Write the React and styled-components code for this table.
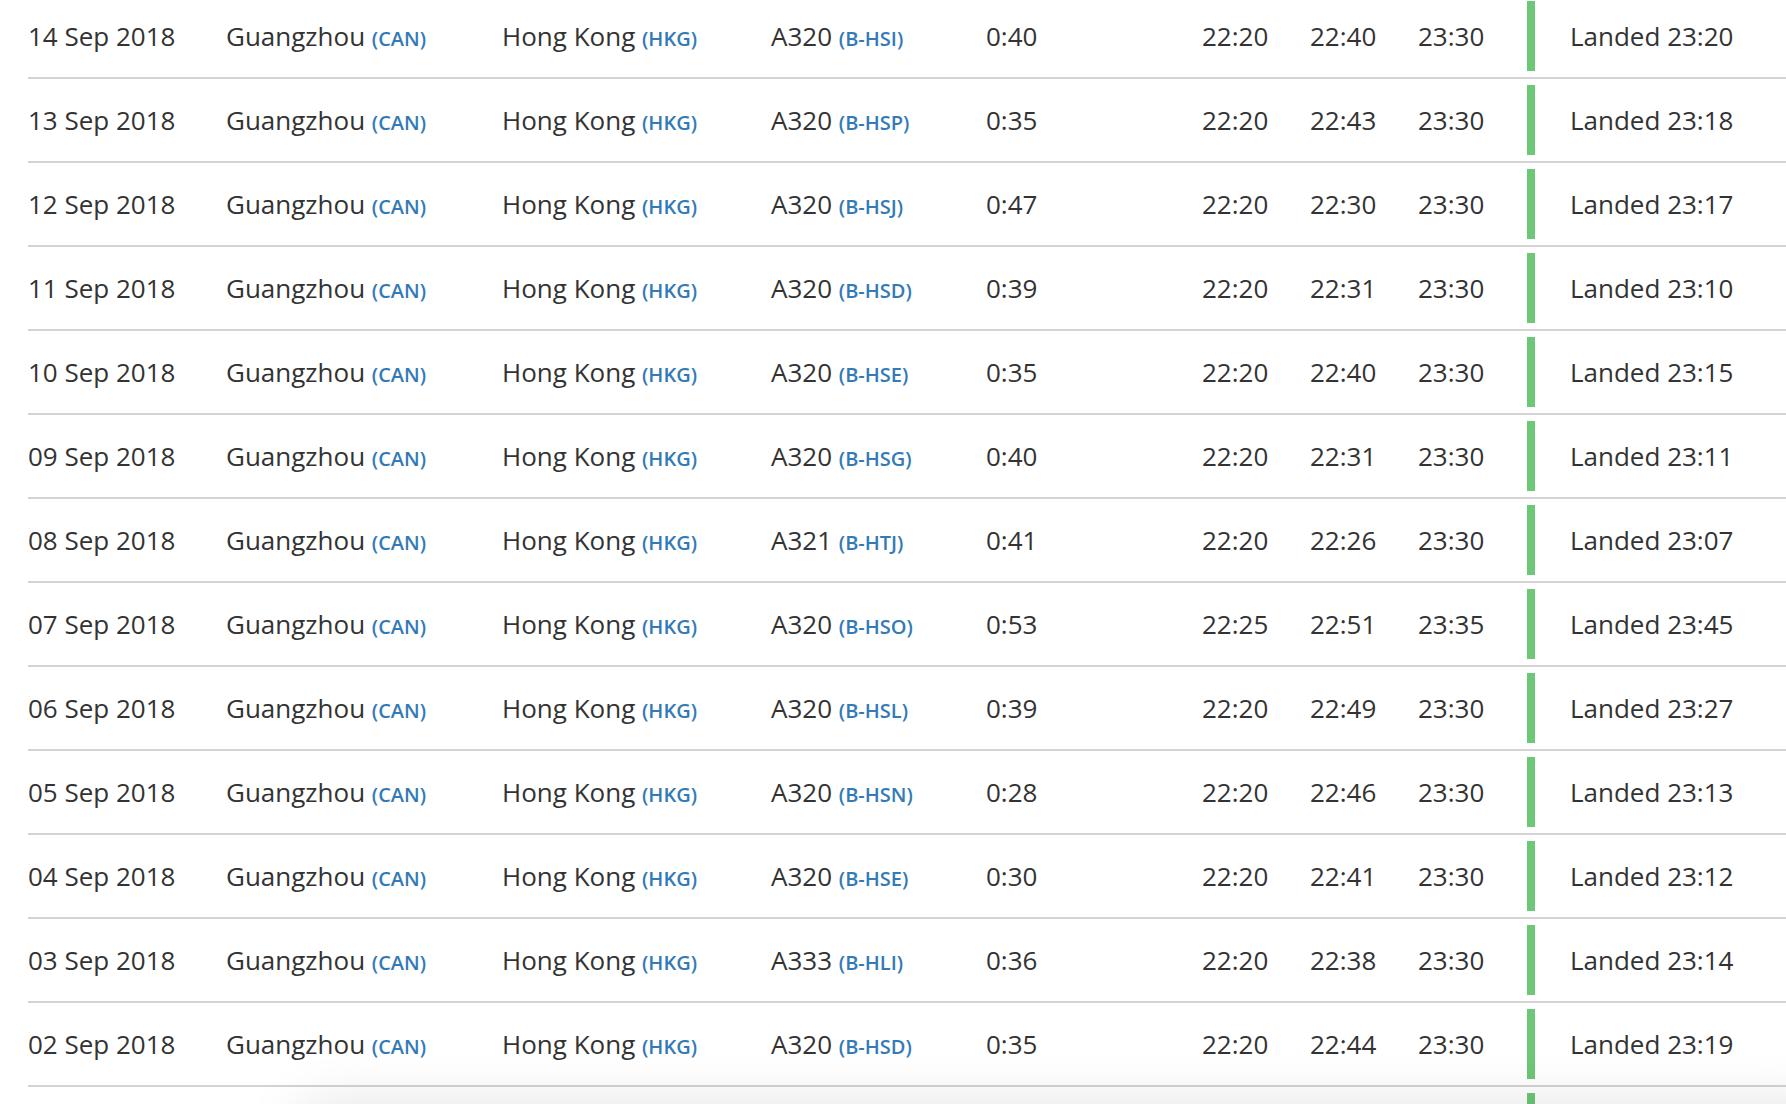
import styled, { createGlobalStyle } from 'styled-components';

const flights = [
    { date: '14 Sep 2018', type: 'A320', reg: 'B-HSI', dur: '0:40', std: '22:20', atd: '22:40', sta: '23:30', landed: '23:20' },
    { date: '13 Sep 2018', type: 'A320', reg: 'B-HSP', dur: '0:35', std: '22:20', atd: '22:43', sta: '23:30', landed: '23:18' },
    { date: '12 Sep 2018', type: 'A320', reg: 'B-HSJ', dur: '0:47', std: '22:20', atd: '22:30', sta: '23:30', landed: '23:17' },
    { date: '11 Sep 2018', type: 'A320', reg: 'B-HSD', dur: '0:39', std: '22:20', atd: '22:31', sta: '23:30', landed: '23:10' },
    { date: '10 Sep 2018', type: 'A320', reg: 'B-HSE', dur: '0:35', std: '22:20', atd: '22:40', sta: '23:30', landed: '23:15' },
    { date: '09 Sep 2018', type: 'A320', reg: 'B-HSG', dur: '0:40', std: '22:20', atd: '22:31', sta: '23:30', landed: '23:11' },
    { date: '08 Sep 2018', type: 'A321', reg: 'B-HTJ', dur: '0:41', std: '22:20', atd: '22:26', sta: '23:30', landed: '23:07' },
    { date: '07 Sep 2018', type: 'A320', reg: 'B-HSO', dur: '0:53', std: '22:25', atd: '22:51', sta: '23:35', landed: '23:45' },
    { date: '06 Sep 2018', type: 'A320', reg: 'B-HSL', dur: '0:39', std: '22:20', atd: '22:49', sta: '23:30', landed: '23:27' },
    { date: '05 Sep 2018', type: 'A320', reg: 'B-HSN', dur: '0:28', std: '22:20', atd: '22:46', sta: '23:30', landed: '23:13' },
    { date: '04 Sep 2018', type: 'A320', reg: 'B-HSE', dur: '0:30', std: '22:20', atd: '22:41', sta: '23:30', landed: '23:12' },
    { date: '03 Sep 2018', type: 'A333', reg: 'B-HLI', dur: '0:36', std: '22:20', atd: '22:38', sta: '23:30', landed: '23:14' },
    { date: '02 Sep 2018', type: 'A320', reg: 'B-HSD', dur: '0:35', std: '22:20', atd: '22:44', sta: '23:30', landed: '23:19' },
];

function App() {
    return (
        <>
            <GlobalStyle />
            <FlightList>
                {flights.map((f) => (
                    <FlightRow key={f.date}>
                        <Cell>{f.date}</Cell>
                        <Cell>
                            Guangzhou <Code>(CAN)</Code>
                        </Cell>
                        <Cell>
                            Hong Kong <Code>(HKG)</Code>
                        </Cell>
                        <Cell>
                            {f.type} <Code>({f.reg})</Code>
                        </Cell>
                        <Cell>{f.dur}</Cell>
                        <Cell>{f.std}</Cell>
                        <Cell>{f.atd}</Cell>
                        <Cell>{f.sta}</Cell>
                        <StatusBar />
                        <Status>Landed {f.landed}</Status>
                    </FlightRow>
                ))}
                {/* next row, only its status bar reaches into view */}
                <FlightRow>
                    <Cell />
                    <Cell />
                    <Cell />
                    <Cell />
                    <Cell />
                    <Cell />
                    <Cell />
                    <Cell />
                    <StatusBar />
                    <Status />
                </FlightRow>
            </FlightList>
            <FooterShadow />
        </>
    );
}

export default App;

const GlobalStyle = createGlobalStyle`
    html, body {
        margin: 0;
        padding: 0;
        background: #fff;
        overflow: hidden;
    }
    body {
        font-family: "Open Sans", "Noto Sans", sans-serif;
        color: #333;
    }
`;

const FlightList = styled.div`
    margin-top: -5px;
    margin-left: 28px;
`;

const FlightRow = styled.div`
    display: grid;
    grid-template-columns: 198px 276px 269px 215px 216px 108px 108px 109px 8px 1fr;
    align-items: center;
    height: 82px;
    border-bottom: 2px solid #d3d3d3;
    font-size: 26px;
    white-space: nowrap;
`;

const Cell = styled.div`
    line-height: 1;
`;

const Code = styled.span`
    font-size: 20px;
    font-weight: 600;
    color: #337ab7;
`;

const StatusBar = styled.div`
    height: 70px;
    background: #6cc776;
`;

const Status = styled.div`
    padding-left: 35px;
    line-height: 1;
`;

const FooterShadow = styled.div`
    position: fixed;
    left: 290px;
    right: -60px;
    bottom: -100px;
    height: 100px;
    border-radius: 40px;
    box-shadow: 0 0 55px rgba(0, 0, 0, 0.11);
    pointer-events: none;
`;
